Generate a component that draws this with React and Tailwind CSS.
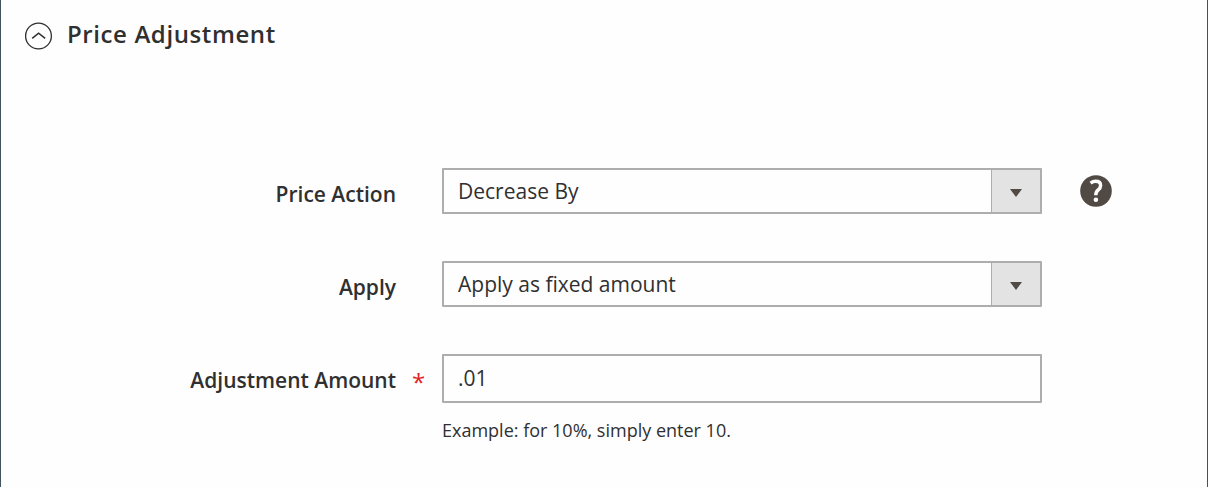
import { useState } from "react";

function SelectField({ id, options }) {
  return (
    <div className="relative">
      <select
        id={id}
        className="block h-[46px] w-full appearance-none rounded-[1px] border-2 border-[#adadad] bg-[#fefefe] pr-14 pl-3.5 text-[21px] leading-7 font-normal text-[#303030]"
      >
        {options.map((option) => (
          <option key={option}>{option}</option>
        ))}
      </select>
      <span className="pointer-events-none absolute inset-y-0.5 right-0.5 flex w-[49px] items-center justify-center border-l border-[#adadad] bg-[#e3e3e3]">
        <svg className="mt-1 h-2 w-3" viewBox="0 0 12 8" aria-hidden="true">
          <path d="M0 0h12L6 8z" fill="#514943" />
        </svg>
      </span>
    </div>
  );
}

function Row({ id, label, required, children, aside }) {
  return (
    <div className="grid grid-cols-[441fr_600fr_165fr]">
      <div className="flex h-12 items-center justify-end pt-1 pr-[18px]">
        <label htmlFor={id} className="text-[21px] leading-7 font-semibold text-[#303030]">
          {label}
        </label>
        <span className="ml-4 w-3 pt-1 text-[24px] leading-7 text-[#e22626]" aria-hidden="true">
          {required ? "*" : ""}
        </span>
      </div>
      <div>{children}</div>
      <div className="flex h-[46px] items-center pl-[38px]">{aside}</div>
    </div>
  );
}

export default function App() {
  const [open, setOpen] = useState(true);
  const [amount, setAmount] = useState(".01");

  return (
    <main className="min-h-screen border-x border-[#41535d] bg-[#fefefe] font-['Open_Sans','Noto_Sans',sans-serif] text-[#303030]">
      <h2 className="px-6 pt-[18px]">
        <button
          type="button"
          aria-expanded={open}
          onClick={() => setOpen(!open)}
          className="flex items-center gap-3.5 text-[24px] leading-8 font-semibold tracking-wide"
        >
          <svg className="size-7" viewBox="0 0 28 28" fill="none" stroke="#303030" aria-hidden="true">
            <circle cx="13.5" cy="14" r="12.9" strokeWidth="1.3" />
            <path d={open ? "M7.2 16.3l6.4-5.2 6.6 5.2" : "M7.2 11.7l6.4 5.2 6.6-5.2"} strokeWidth="1.5" />
          </svg>
          <span className="pb-1">Price Adjustment</span>
        </button>
      </h2>

      {open && (
        <form className="flex flex-col gap-[45px] pt-[114px] pb-10" onSubmit={(e) => e.preventDefault()}>
          <Row
            id="price-action"
            label="Price Action"
            aside={
              <button type="button" aria-label="Help">
                <svg className="size-8" viewBox="0 0 32 32" aria-hidden="true">
                  <circle cx="16" cy="16" r="15.8" fill="#514943" />
                  <path
                    d="M10.6 8.1c1.6-1.2 3.3-1.8 5.1-1.8 3.1 0 4.9 1.6 4.9 4.1 0 2-.8 3.2-2.4 4.5-1.7 1.4-2.4 2.6-2.4 5.3"
                    fill="none"
                    stroke="#fefefe"
                    strokeWidth="3.5"
                  />
                  <circle cx="15.9" cy="24.7" r="2.3" fill="#fefefe" />
                </svg>
              </button>
            }
          >
            <SelectField id="price-action" options={["Decrease By", "Increase By"]} />
          </Row>
          <Row id="apply" label="Apply">
            <SelectField id="apply" options={["Apply as fixed amount", "Apply as percentage"]} />
          </Row>
          <Row id="amount" label="Adjustment Amount" required>
            <input
              id="amount"
              type="text"
              required
              aria-describedby="amount-note"
              value={amount}
              onChange={(e) => setAmount(e.target.value)}
              className="block h-[49px] w-full rounded-[1px] border-2 border-[#adadad] bg-[#fefefe] px-3.5 pb-0.5 text-[21px] leading-7 font-normal text-[#303030]"
            />
            <p id="amount-note" className="pt-[15px] text-[18px] leading-6 font-normal">
              Example: for 10%, simply enter 10.
            </p>
          </Row>
        </form>
      )}
    </main>
  );
}
